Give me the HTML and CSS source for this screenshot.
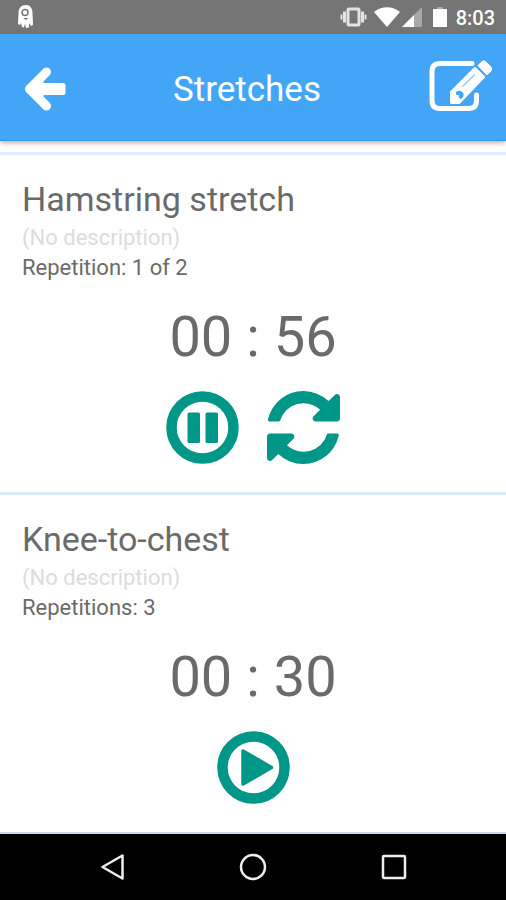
FILE: index.html
```html
<!DOCTYPE html>
<html lang="en">
<head>
<meta charset="utf-8">
<meta name="viewport" content="width=device-width, initial-scale=1">
<title>Stretches</title>
<link rel="stylesheet" href="styles.css">
</head>
<body>
<div class="screen">
  <div class="status">
    <svg class="status-app" width="18" height="24" viewBox="0 0 18 24" aria-hidden="true">
      <path fill="#fff" d="M9 0C4 0 1.500 3.500 1.500 8L1 19l2 1 1-2 1 4 2 .5 1-4 1 4.500 3-.5V18l2 3 2-1-.5-12C15.500 3 13 0 9 0z"/>
      <circle cx="8" cy="7.500" r="3" fill="none" stroke="#757575" stroke-width="1.500"/>
      <path d="M6 13h5l-2 2z" fill="#757575"/>
    </svg>
    <div class="status-right">
      <svg width="27" height="20" viewBox="0 0 27 20" aria-hidden="true">
        <rect x="8" y="2" width="11" height="16" rx="1" fill="none" stroke="#e4e4e4" stroke-width="3"/>
        <path d="M4.500 4.500v11M22.500 4.500v11" stroke="#e4e4e4" stroke-width="3"/>
        <path d="M1.500 7.500v5M25.500 7.500v5" stroke="#e4e4e4" stroke-width="2"/>
      </svg>
      <svg class="wifi" width="26" height="20" viewBox="0 0 26 20" aria-hidden="true">
        <path d="M0 5C7-1.500 19-1.500 26 5L13 20z" fill="#fff"/>
      </svg>
      <svg class="signal" width="20" height="20" viewBox="0 0 20 20" aria-hidden="true">
        <path d="M0 20L20 0v20z" fill="#a8a8a8"/>
        <path d="M0 20L12 8v12z" fill="#fff"/>
      </svg>
      <svg class="battery" width="14" height="20" viewBox="0 0 14 20" aria-hidden="true">
        <path d="M0 2h14v18H0z" fill="#fff"/>
        <path d="M4 0h6v2H4z" fill="#aaa"/>
      </svg>
      <span class="clock">8:03</span>
    </div>
  </div>

  <header class="bar">
    <button class="icon-btn" type="button" aria-label="Back">
      <svg width="42" height="44" viewBox="0 0 42 44" aria-hidden="true">
        <path d="M22.500 5L5.500 22l17 17" fill="none" stroke="#fff" stroke-width="9" stroke-linecap="round" stroke-linejoin="round"/>
        <path d="M8 16h31q2.500 0 2.500 2.500v7q0 2.500-2.500 2.500H8z" fill="#fff"/>
        <path d="M18 10l2 7v10l-2 7L8 22z" fill="#fff"/>
      </svg>
    </button>
    <h1 class="title">Stretches</h1>
    <button class="icon-btn edit" type="button" aria-label="Edit">
      <svg width="64" height="52" viewBox="0 0 64 52" aria-hidden="true">
        <path d="M44 3.500H12Q4 3.500 4 11.500v29q0 8 8 8h28.500q8 0 8-8V35" fill="none" stroke="#fff" stroke-width="5" stroke-linecap="round"/>
        <path d="M23.500 32L47 8.500l8.500 8.500-24.500 25.500h-7.500z" fill="#fff" stroke="#fff" stroke-width="3" stroke-linejoin="round"/>
        <path d="M50 5.500l4-4q2-1.500 4 .5l5 5q1.800 2 0 4l-4 4z" fill="#fff" stroke="#fff" stroke-linejoin="round"/>
        <path d="M34 27l13-12.500" stroke="#9cccf8" stroke-width="1.500"/>
        <path d="M28 32q5-3 7.500 1.500Q36 37 33 39l-2.500-1.500 1-2-3.500-1z" fill="#42a5f5"/>
      </svg>
    </button>
  </header>

  <main class="list">
    <section class="card">
      <h2 class="name">Hamstring stretch</h2>
      <p class="desc">(No description)</p>
      <p class="reps">Repetition: 1 of 2</p>
      <div class="time">00 : 56</div>
      <div class="actions">
        <button class="icon-btn" type="button" aria-label="Pause">
          <svg width="73" height="73" viewBox="0 0 73 73" aria-hidden="true">
            <circle cx="36.500" cy="36.500" r="31" fill="none" stroke="#009688" stroke-width="10.500"/>
            <rect x="21.500" y="21.500" width="12.500" height="30.500" rx="1.500" fill="#009688"/>
            <rect x="39.500" y="21.500" width="12.500" height="30.500" rx="1.500" fill="#009688"/>
          </svg>
        </button>
        <button class="icon-btn" type="button" aria-label="Restart">
          <svg width="73" height="73" viewBox="0 0 1536 1536" aria-hidden="true">
            <path fill="#009688" d="M1511 928q0 5-1 7-64 268-268 434.500T764 1536q-146 0-282.500-55T238 1324l-129 129q-19 19-45 19t-45-19-19-45V960q0-26 19-45t45-19h448q26 0 45 19t19 45-19 45l-137 137q71 66 161 102t187 36q134 0 250-65t186-179q11-17 53-117 8-23 30-23h192q13 0 22.500 9.500t9.500 22.500zM1536 128v448q0 26-19 45t-45 19h-448q-26 0-45-19t-19-45 19-45l138-138Q969 256 768 256q-134 0-250 65T332 500q-11 17-53 117-8 23-30 23H50q-13 0-22.500-9.500T18 608v-7q65-268 270-434.500T768 0q146 0 284 55.500T1297 212l130-129q19-19 45-19t45 19 19 45z"/>
          </svg>
        </button>
      </div>
    </section>

    <section class="card">
      <h2 class="name">Knee-to-chest</h2>
      <p class="desc">(No description)</p>
      <p class="reps">Repetitions: 3</p>
      <div class="time">00 : 30</div>
      <div class="actions">
        <button class="icon-btn" type="button" aria-label="Start">
          <svg width="73" height="73" viewBox="0 0 73 73" aria-hidden="true">
            <circle cx="36.500" cy="36.500" r="31" fill="none" stroke="#009688" stroke-width="10.500"/>
            <path d="M26 20v33l28.500-16.500z" fill="#009688" stroke="#009688" stroke-width="3.500" stroke-linejoin="round"/>
          </svg>
        </button>
      </div>
    </section>
  </main>

  <nav class="keys" aria-label="System">
    <button class="icon-btn" type="button" aria-label="System back">
      <svg width="28" height="28" viewBox="0 0 28 28" aria-hidden="true">
        <path d="M24.500 2.500v23L4.500 14z" fill="none" stroke="#eee" stroke-width="2.500" stroke-linejoin="round"/>
      </svg>
    </button>
    <button class="icon-btn" type="button" aria-label="Home">
      <svg width="28" height="28" viewBox="0 0 28 28" aria-hidden="true">
        <circle cx="14" cy="14" r="12" fill="none" stroke="#eee" stroke-width="2.500"/>
      </svg>
    </button>
    <button class="icon-btn" type="button" aria-label="Recent apps">
      <svg width="28" height="28" viewBox="0 0 28 28" aria-hidden="true">
        <rect x="3" y="3" width="22" height="22" rx="1" fill="none" stroke="#eee" stroke-width="2.500"/>
      </svg>
    </button>
  </nav>
</div>
</body>
</html>
```
FILE: styles.css
```css
* {
  box-sizing: border-box;
}

body {
  margin: 0;
  background: #fff;
  color: #6a6a6a;
  font-family: Roboto, "Liberation Sans", sans-serif;
}

h1, h2, p {
  margin: 0;
  font-weight: 400;
}

svg {
  display: block;
}

.screen {
  display: flex;
  flex-direction: column;
  min-height: 100vh;
}

.icon-btn {
  padding: 0;
  border: 0;
  background: none;
}

.status {
  display: flex;
  align-items: center;
  justify-content: space-between;
  height: 34px;
  padding: 0 11px 0 17px;
  background: #757575;
}

.status-right {
  display: flex;
  align-items: center;
}

.wifi {
  margin-left: 7px;
}

.signal {
  margin-left: 2px;
}

.battery {
  margin-left: 11px;
}

.clock {
  margin-left: 9px;
  padding-top: 2px;
  color: #fff;
  font-size: 20px;
  font-weight: 500;
  line-height: 24px;
}

.bar {
  position: relative;
  display: flex;
  align-items: center;
  justify-content: space-between;
  height: 107px;
  padding: 3px 14px 0 24px;
  background: #42a5f5;
  border-bottom: 1px solid #3796e4;
  box-shadow: 0 2px 5px rgba(0, 0, 0, 0.3);
}

.title {
  padding-top: 2px;
  color: #fff;
  font-size: 35px;
  line-height: 40px;
}

.edit {
  margin-bottom: 6px;
}

.list {
  flex: 1;
  padding-top: 11px;
}

.card {
  padding: 22px 22px 28px;
  border-top: 3px solid #deebf9;
}

.card:last-child {
  border-bottom: 2px solid #c4dcf0;
}

.name {
  margin-bottom: 2px;
  font-size: 34px;
  line-height: 44px;
}

.desc,
.reps {
  font-size: 22px;
  line-height: 30px;
}

.desc {
  color: #dcdcdc;
}

.time {
  margin-top: 20px;
  font-size: 56px;
  line-height: 68px;
  text-align: center;
}

.actions {
  display: flex;
  justify-content: center;
  gap: 28px;
  margin-top: 20px;
}

.keys {
  display: grid;
  grid-template-columns: repeat(3, 1fr);
  justify-items: center;
  align-items: center;
  height: 66px;
  padding: 0 42px;
  background: #000;
}
```
